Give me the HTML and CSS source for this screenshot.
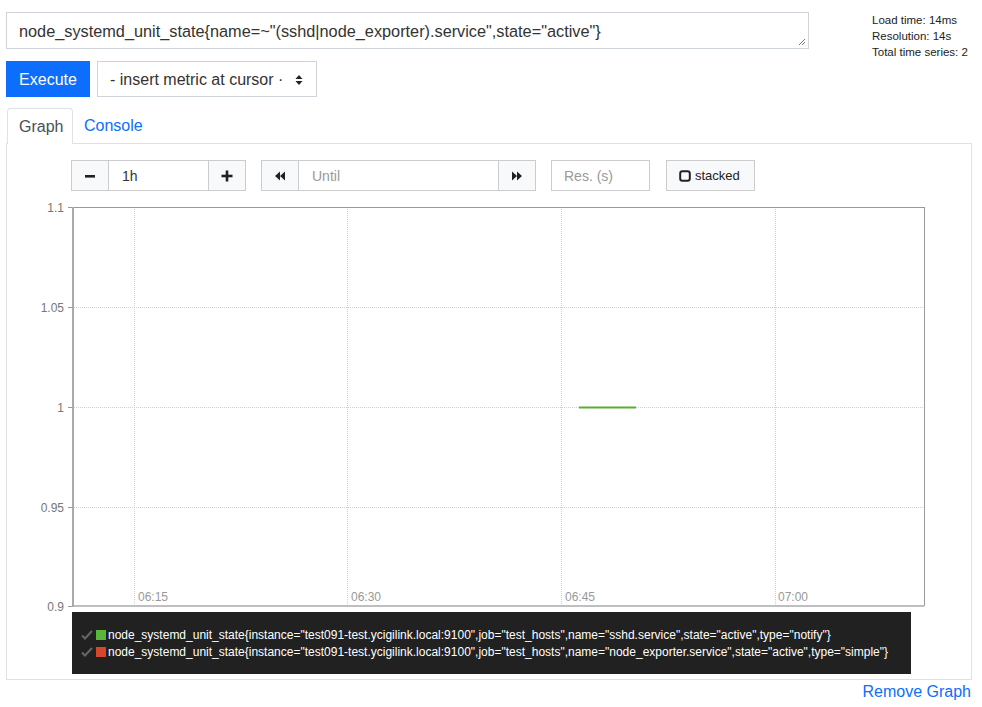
FILE: index.html
```html
<!DOCTYPE html>
<html>
<head>
<meta charset="utf-8">
<link rel="stylesheet" href="styles.css">
</head>
<body>
<div class="page">
  <div class="top-row">
    <div class="expr">
      <div class="expr-text">node_systemd_unit_state{name=~"(sshd|node_exporter).service",state="active"}</div>
      <svg class="grip" width="8" height="8" viewBox="0 0 8 8"><path d="M7 1L1 7M7 4L4 7" stroke="#777" stroke-width="1"/></svg>
    </div>
    <div class="stats">
      <div>Load time: 14ms</div>
      <div>Resolution: 14s</div>
      <div>Total time series: 2</div>
    </div>
  </div>
  <div class="exec-row">
    <button class="execute">Execute</button>
    <div class="select">
      <span>- insert metric at cursor ·</span>
      <svg width="8" height="12" viewBox="0 0 8 12"><path d="M4 1L7.5 5H0.5Z M4 11L7.5 7H0.5Z" fill="#222"/></svg>
    </div>
  </div>
  <div class="tabs">
    <div class="tab active">Graph</div>
    <div class="tab link">Console</div>
  </div>
  <div class="panel">
    <div class="controls">
      <div class="group">
        <div class="btn"><svg width="12" height="12" viewBox="0 0 12 12"><rect x="1" y="5" width="10" height="2.6" fill="#222"/></svg></div>
        <div class="field w99">1h</div>
        <div class="btn"><svg width="12" height="12" viewBox="0 0 12 12"><rect x="0.5" y="4.7" width="11" height="2.6" fill="#222"/><rect x="4.7" y="0.5" width="2.6" height="11" fill="#222"/></svg></div>
      </div>
      <div class="group">
        <div class="btn"><svg width="12" height="12" viewBox="0 0 12 12"><path d="M6 1.5V10.5L1 6Z M11 1.5V10.5L6 6Z" fill="#222"/></svg></div>
        <div class="field w199 ph">Until</div>
        <div class="btn"><svg width="12" height="12" viewBox="0 0 12 12"><path d="M1 1.5V10.5L6 6Z M6 1.5V10.5L11 6Z" fill="#222"/></svg></div>
      </div>
      <div class="field w99 ph solo">Res. (s)</div>
      <div class="stacked">
        <svg width="12" height="12" viewBox="0 0 12 12"><rect x="1.2" y="1.2" width="9.6" height="9.6" rx="2.2" fill="none" stroke="#222" stroke-width="2"/></svg>
        <span>stacked</span>
      </div>
    </div>
    <svg class="chart" width="963" height="421" viewBox="0 0 963 421">
      <g stroke="#cfcfcf" stroke-width="1" stroke-dasharray="1,1">
        <line x1="127.5" y1="16" x2="127.5" y2="415"/>
        <line x1="340.5" y1="16" x2="340.5" y2="415"/>
        <line x1="554.5" y1="16" x2="554.5" y2="415"/>
        <line x1="768.5" y1="16" x2="768.5" y2="415"/>
        <line x1="65" y1="116.5" x2="917" y2="116.5"/>
        <line x1="65" y1="216.5" x2="917" y2="216.5"/>
        <line x1="65" y1="316.5" x2="917" y2="316.5"/>
      </g>
      <line x1="65" y1="16.5" x2="917" y2="16.5" stroke="#999" stroke-width="1"/>
      <line x1="917.5" y1="16" x2="917.5" y2="415" stroke="#999" stroke-width="1"/>
      <line x1="66" y1="16" x2="66" y2="416" stroke="#aaa" stroke-width="2"/>
      <line x1="65" y1="415" x2="917" y2="415" stroke="#aaa" stroke-width="1.5"/>
      <g stroke="#999" stroke-width="1">
        <line x1="61" y1="16.5" x2="65" y2="16.5"/>
        <line x1="61" y1="116.5" x2="65" y2="116.5"/>
        <line x1="61" y1="216.5" x2="65" y2="216.5"/>
        <line x1="61" y1="316.5" x2="65" y2="316.5"/>
        <line x1="61" y1="415.5" x2="65" y2="415.5"/>
      </g>
      <g class="ylab" text-anchor="end">
        <text x="57" y="20.5">1.1</text>
        <text x="57" y="120.5">1.05</text>
        <text x="57" y="220.5">1</text>
        <text x="57" y="320.5">0.95</text>
        <text x="57" y="419.5">0.9</text>
      </g>
      <g class="xlab">
        <text x="131" y="410">06:15</text>
        <text x="344" y="410">06:30</text>
        <text x="558" y="410">06:45</text>
        <text x="771" y="410">07:00</text>
      </g>
      <line x1="572" y1="216.5" x2="629" y2="216.5" stroke="#5cad35" stroke-width="2"/>
    </svg>
    <div class="legend">
      <div class="lrow"><svg class="check" width="12" height="10" viewBox="0 0 12 10"><path d="M1 5.5L4 8.5L11 1" fill="none" stroke="#666" stroke-width="2"/></svg><span class="swatch green"></span><span>node_systemd_unit_state{instance="test091-test.ycigilink.local:9100",job="test_hosts",name="sshd.service",state="active",type="notify"}</span></div>
      <div class="lrow"><svg class="check" width="12" height="10" viewBox="0 0 12 10"><path d="M1 5.5L4 8.5L11 1" fill="none" stroke="#666" stroke-width="2"/></svg><span class="swatch red"></span><span>node_systemd_unit_state{instance="test091-test.ycigilink.local:9100",job="test_hosts",name="node_exporter.service",state="active",type="simple"}</span></div>
    </div>
  </div>
  <div class="remove-row"><span class="remove">Remove Graph</span></div>
</div>
</body>
</html>
```
FILE: styles.css
```css
* { box-sizing: border-box; }
body {
  margin: 0;
  font-family: "Liberation Sans", Arial, sans-serif;
  color: #212529;
  background: #fff;
}
.page {
  padding: 12px 11px 0 6px;
}
.top-row {
  display: flex;
  align-items: flex-start;
  height: 37px;
}
.expr {
  position: relative;
  width: 803px;
  height: 37px;
  border: 1px solid #ced4da;
  padding: 0 0 0 12px;
  display: flex;
  align-items: center;
  font-size: 16.3px;
  color: #333;
}
.expr-text { padding-top: 2px; }
.grip {
  position: absolute;
  right: 2px;
  bottom: 2px;
}
.stats {
  margin-left: 63px;
  font-size: 11.5px;
  line-height: 16px;
  color: #222;
}
.exec-row {
  display: flex;
  margin-top: 12px;
  gap: 7px;
}
.execute {
  width: 84px;
  height: 36px;
  border: none;
  background: #0d6efd;
  color: #fff;
  font-family: "Liberation Sans", Arial, sans-serif;
  font-size: 16px;
  padding: 2px 0 0 0;
}
.select {
  width: 220px;
  height: 36px;
  border: 1px solid #ced4da;
  display: flex;
  align-items: center;
  justify-content: space-between;
  padding: 2px 13px 0 12px;
  font-size: 16px;
  color: #333;
}
.tabs {
  display: flex;
  margin-top: 11px;
  padding-left: 1px;
  height: 35px;
}
.tab {
  height: 36px;
  display: flex;
  align-items: center;
  font-size: 16px;
}
.tab.active {
  width: 66px;
  border: 1px solid #dee2e6;
  border-bottom: none;
  border-radius: 4px 4px 0 0;
  background: #fff;
  padding-left: 11px;
  color: #495057;
  position: relative;
  z-index: 1;
}
.tab.link {
  color: #0d6efd;
  padding-left: 11px;
}
.panel {
  border: 1px solid #dee2e6;
  width: 966px;
  padding: 16px 0 5px 0;
}
.controls {
  display: flex;
  align-items: center;
  margin-left: 64px;
  height: 31px;
  gap: 15px;
}
.group {
  display: flex;
  height: 31px;
}
.btn {
  width: 38px;
  height: 31px;
  background: #f8f9fa;
  border: 1px solid #ccc;
  display: flex;
  align-items: center;
  justify-content: center;
}
.field {
  height: 31px;
  border-top: 1px solid #ccc;
  border-bottom: 1px solid #ccc;
  display: flex;
  align-items: center;
  padding-left: 13px;
  font-size: 14px;
  color: #333;
}
.field.ph { color: #999; }
.w99 { width: 99px; }
.w199 { width: 199px; }
.field.solo {
  border: 1px solid #ccc;
  padding-left: 12px;
  margin-right: 1px;
}
.stacked {
  width: 89px;
  height: 31px;
  background: #f8f9fa;
  border: 1px solid #ccc;
  display: flex;
  align-items: center;
  padding-left: 12px;
  gap: 4px;
  font-size: 13px;
  color: #222;
}
.chart {
  display: block;
}
.ylab text {
  font-family: "Liberation Sans", Arial, sans-serif;
  font-size: 12px;
  fill: #777;
}
.xlab text {
  font-family: "Liberation Sans", Arial, sans-serif;
  font-size: 12px;
  fill: #999;
}
.legend {
  margin-left: 65px;
  width: 839px;
  height: 62px;
  background: #212121;
  padding: 14px 0 0 9px;
  font-size: 12px;
  color: #fff;
}
.lrow {
  display: flex;
  align-items: center;
  height: 17px;
  white-space: nowrap;
}
.check {
  margin-right: 3px;
}
.swatch {
  width: 10px;
  height: 10px;
  margin-right: 2px;
}
.swatch.green { background: #5cb53b; }
.swatch.red { background: #d5472c; }
.remove-row {
  display: flex;
  justify-content: flex-end;
  width: 965px;
  margin-top: 3px;
}
.remove {
  color: #0d6efd;
  font-size: 16px;
}
```
